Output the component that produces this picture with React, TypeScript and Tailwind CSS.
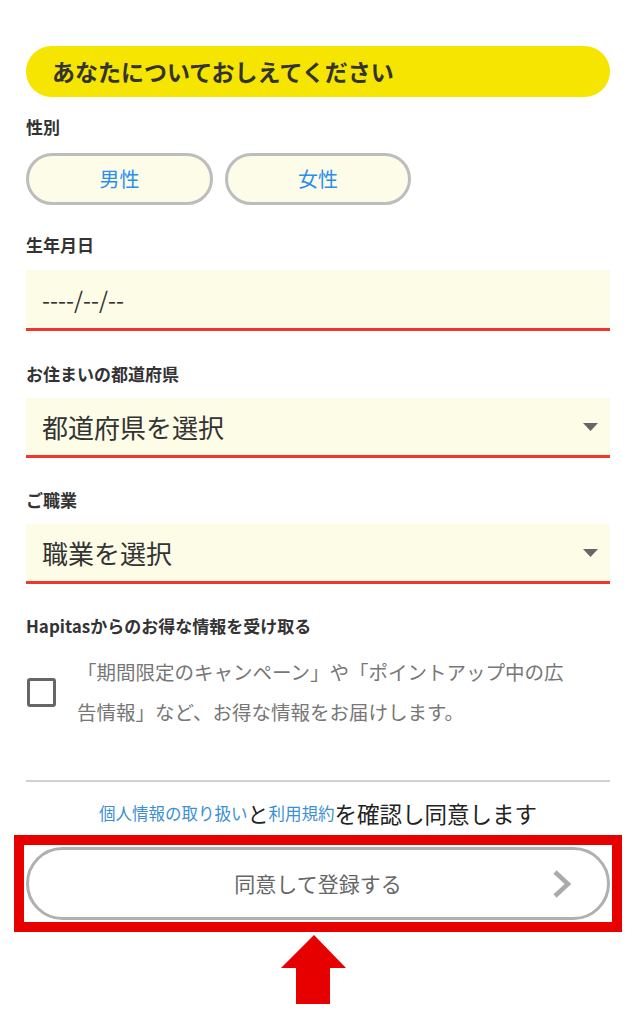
import React from "react";

const font = { fontFamily: '"Noto Sans CJK JP", "Noto Sans", sans-serif' };

function Label({ children, className = "" }: { children: React.ReactNode; className?: string }) {
  return (
    <div className={`text-[17px] leading-[24px] font-bold text-[#333] ${className}`}>{children}</div>
  );
}

function SelectBox({ text, className = "" }: { text: string; className?: string }) {
  return (
    <div
      className={`flex items-center justify-between h-[60px] bg-[#fcfce7] border-b-[3px] border-[#f3352c] pl-[16px] pr-[12px] ${className}`}
    >
      <span className="text-[26px] leading-[30px] text-[#333]">{text}</span>
      <svg width="15" height="8" viewBox="0 0 15 8">
        <polygon points="0,0 15,0 7.5,8" fill="#666" />
      </svg>
    </div>
  );
}

export default function App() {
  return (
    <div className="bg-white w-[637px] h-[1024px] overflow-hidden" style={font}>
      <div className="px-[26px] pt-[46px] w-[636px]">
        <div className="h-[51px] rounded-full bg-[#f5e500] flex items-center pl-[26px]">
          <span className="text-[23px] font-bold text-[#333] leading-none">あなたについておしえてください</span>
        </div>

        <Label className="mt-[18px]">性別</Label>
        <div className="mt-[14px] flex gap-[12px]">
          <div className="w-[187px] h-[52px] rounded-full border-[3px] border-[#bdbdbd] bg-[#fcfce9] flex items-center justify-center text-[20px] text-[#2a8ef0]">
            男性
          </div>
          <div className="w-[186px] h-[52px] rounded-full border-[3px] border-[#bdbdbd] bg-[#fcfce9] flex items-center justify-center text-[20px] text-[#2a8ef0]">
            女性
          </div>
        </div>

        <Label className="mt-[28px]">生年月日</Label>
        <div className="mt-[13px] h-[61px] bg-[#fcfce7] border-b-[3px] border-[#f3352c] flex items-center pl-[16px]">
          <span className="text-[23px] text-[#333]">----/--/--</span>
        </div>

        <Label className="mt-[31px]">お住まいの都道府県</Label>
        <SelectBox text="都道府県を選択" className="mt-[12px]" />

        <Label className="mt-[30px]">ご職業</Label>
        <SelectBox text="職業を選択" className="mt-[12px]" />

        <Label className="mt-[30px]">Hapitasからのお得な情報を受け取る</Label>
        <div className="mt-[14px] flex items-center">
          <div className="w-[29px] h-[29px] ml-[1px] border-[3px] border-[#666] rounded-[3px] shrink-0" />
          <p className="ml-[21px] w-[495px] text-[19.5px] leading-[40px] text-[#777]">
            「期間限定のキャンペーン」や「ポイントアップ中の広告情報」など、お得な情報をお届けします。
          </p>
        </div>

        <div className="mt-[48px] h-[2px] bg-[#d0d0d0]" />

        <div className="mt-[19px] flex items-end justify-center leading-[24px]">
          <span className="text-[16.5px] text-[#3b8fd3]">個人情報の取り扱い</span>
          <span className="text-[21px] text-[#222]">と</span>
          <span className="text-[16.5px] text-[#3b8fd3]">利用規約</span>
          <span className="text-[22.5px] text-[#222]">を確認し同意します</span>
        </div>

        <div className="mt-[10px] -mx-[12px] border-[10px] border-[#e60000] p-[2px]">
          <div className="h-[73px] rounded-full border-[3px] border-[#b0b0b0] bg-white flex items-center justify-center relative">
            <span className="text-[21px] text-[#666]">同意して登録する</span>
            <svg className="absolute right-[34px] top-[19px]" width="22" height="30" viewBox="0 0 22 30">
              <polyline points="4,3 17,15 4,27" fill="none" stroke="#aaa" strokeWidth="4.5" />
            </svg>
          </div>
        </div>

        <svg className="mt-[3px] ml-[255px] block" width="66" height="69" viewBox="0 0 66 69">
          <polygon points="33,0 65,33 49,33 49,69 15,69 15,33 0,33" fill="#e60000" />
        </svg>
      </div>
    </div>
  );
}
